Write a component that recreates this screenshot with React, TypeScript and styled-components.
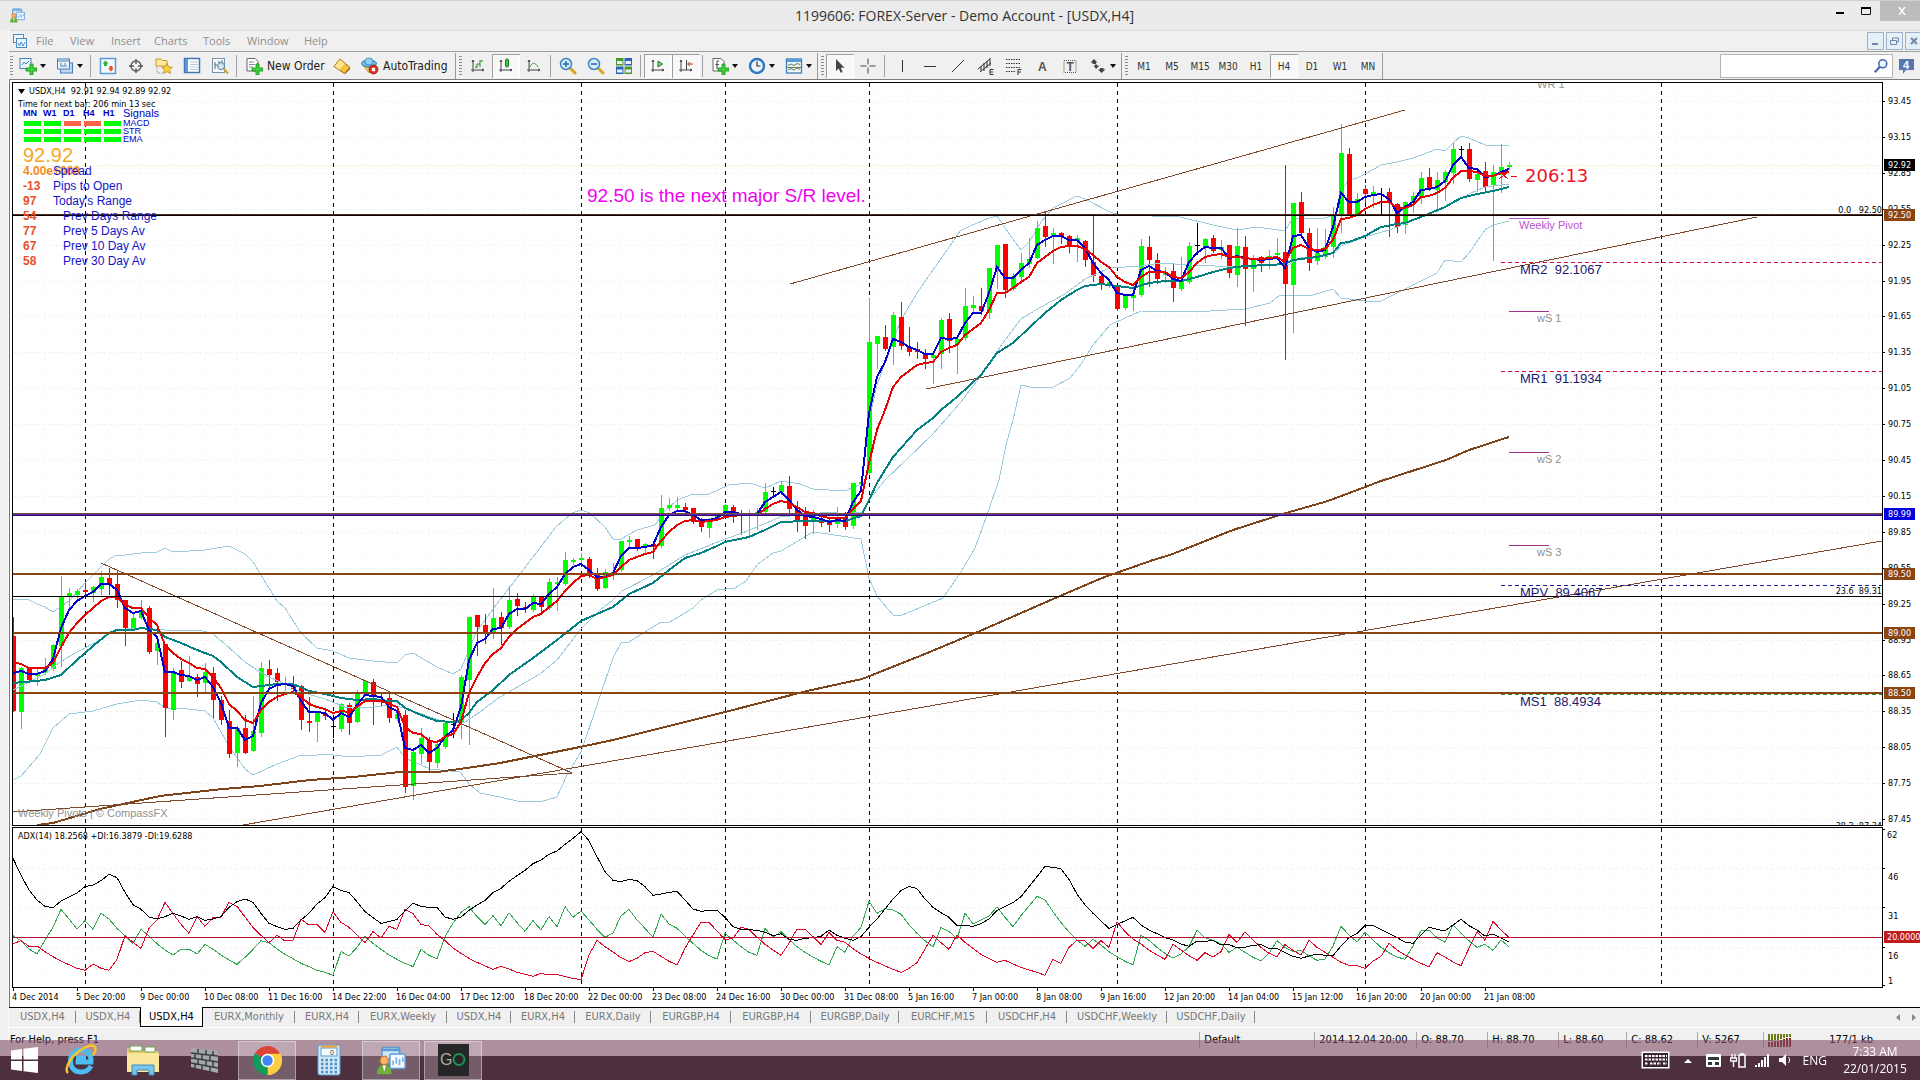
import React from 'react';
import styled, { createGlobalStyle, css } from 'styled-components';

const UI = `"DejaVu Sans Condensed", "Noto Sans", Tahoma, sans-serif`;
const SEGOE = `"Open Sans", "Noto Sans", "Segoe UI", sans-serif`;
const ARIAL = `"Liberation Sans", Arial, sans-serif`;

const GlobalStyle = createGlobalStyle`
  * { box-sizing: border-box; }
  body { margin: 0; background: #000; font-family: ${UI}; font-size: 11px; color: #000; overflow: hidden; }
  button { font: inherit; color: inherit; border: 0; padding: 0; background: none; }
`;

/* ---------- market data: bars are 8px apart ---------- */

type Bar = [string, number, number, number, number]; // kind, high, body top, body bottom, low

const BARS: Bar[] = `
r617,636,711,711 g667,668,712,728 r667,668,680,682 g669,673,676,685 g658,669,673,674 g644,645,669,670 g576,597,646,666 g588,593,597,608
g589,591,595,598 r583,590,591,596 g586,587,593,601 g571,577,589,594 r568,578,585,594 r571,584,600,607 r600,600,628,645 g612,618,628,630
g600,611,618,618 r606,608,652,653 g641,643,651,664 r644,644,708,736 g668,672,710,719 r661,670,682,687 g656,677,681,681 r674,677,684,696
g663,672,683,693 r667,673,700,717 r696,700,720,724 r710,721,754,757 g726,728,753,766 r715,728,753,753 g696,731,751,751 g662,668,733,736
r660,669,675,687 r668,673,682,700 g677,683,685,690 r676,685,689,693 r685,686,720,729 r697,721,722,731 g712,713,722,741 r708,714,715,719
k720,726,727,737 g703,704,729,731 r703,705,723,734 g690,693,722,722 g680,681,693,694 r679,682,696,724 r693,699,701,705 r692,698,718,722
g712,714,719,720 r710,715,787,792 g750,752,786,799 g728,738,754,763 r737,741,762,770 g743,744,763,767 g721,723,747,748 k713,724,725,737
g675,677,722,738 g617,617,680,744 r615,615,627,655 r614,625,633,643 g588,618,634,638 r612,617,628,644 g586,600,627,628 r593,599,606,615
r602,607,609,612 g594,597,610,611 r597,597,607,613 g578,582,608,609 g577,582,584,610 g552,560,584,585 g558,560,562,564 g553,558,560,565
r557,559,573,577 r568,575,589,590 g569,572,588,588 g563,572,575,579 g541,541,570,571 g536,540,542,548 r539,539,548,550 g543,544,547,553
r541,544,547,558 g495,508,546,547 g498,505,508,510 g497,505,508,510 r503,507,510,512 r508,508,522,523 r518,520,527,531 g518,520,528,537
g514,516,519,520 g504,505,513,514 r505,507,516,522 r510,514,516,534 g510,513,516,537 g508,512,514,529 g483,492,512,513 k487,491,492,497
g481,485,492,494 r476,486,509,512 r501,510,520,531 r507,514,526,538 g510,515,521,533 r516,519,523,526 r518,521,525,531 g507,519,524,527
r512,517,527,529 g483,483,526,528 g480,482,484,485 g298,342,473,473 g336,336,344,368 r325,337,349,350 g312,315,347,364 r302,317,346,349
r327,347,352,355 r342,349,352,358 r349,353,359,368 g353,355,358,383 g318,320,354,368 r313,319,341,352 g337,339,344,373 g288,306,338,340
g296,305,308,313 r288,306,311,314 g268,268,313,318 g245,245,268,288 r244,244,290,297 g273,276,289,290 g253,263,277,283 g238,259,264,267
g221,228,258,258 r212,226,237,246 g228,233,237,263 r232,233,236,243 r235,236,246,252 g235,238,241,261 r240,241,260,266 r215,262,276,281
r275,276,284,289 g280,282,286,287 r286,286,309,310 g295,296,308,309 g285,295,298,310 g239,246,295,296 r236,247,260,286 r253,260,279,283
g267,272,275,282 r264,271,288,301 g257,281,289,290 g242,246,282,283 k223,245,246,254 g238,239,247,262 r235,238,251,252 g240,247,250,258
r245,245,273,277 g228,246,275,286 r236,247,269,325 g255,260,269,291 r256,257,263,271 g250,256,259,268 g238,253,255,258 r165,252,284,359
g203,203,285,332 r192,202,233,235 r228,233,263,270 g228,253,261,264 g229,247,257,258 g207,215,247,257 g124,153,215,232 r148,154,214,215
g193,199,214,215 r185,189,194,202 g186,192,195,207 k188,194,195,215 r188,192,202,236 r203,204,227,232 g201,202,225,233 g192,196,203,212
g172,178,197,203 r168,177,188,190 g172,180,190,211 g170,172,182,200 g143,149,173,183 k146,149,150,157 r143,149,179,181 g170,174,180,191
r162,171,187,192 g165,172,185,260 g144,167,175,192 g162,165,167,169
`.trim().split(/\s+/).map((s) => [s[0], ...s.slice(1).split(',').map(Number)] as Bar);

const nums = (s: string) => s.trim().split(/\s+/).map(Number);

const FAST = nums(`673 671 674 674 671 659 628 610 601 596 592 584 584 590 608 613 611 630 637 672 672 675 676 680 677 687 703 728 728 740 736 703
689 685 684 686 701 712 712 713 720 713 717 705 695 696 697 707 711 748 750 745 753 748 737 730 707 660 643 639 629 628 614 609 609 603 604 594
587 574 567 564 570 577 577 573 556 548 548 547 545 527 515 511 511 515 520 520 518 512 512 514 515 514 502 497 492 500 510 516 517 519 522 520
521 502 491 413 377 362 339 342 347 350 354 354 338 339 338 323 313 313 293 267 278 278 270 263 245 240 236 236 240 240 248 263 273 280 293 295
295 270 266 271 272 279 281 262 253 247 248 248 258 256 258 259 260 259 258 268 236 235 248 252 250 227 193 202 202 197 195 194 199 213 207 202
190 189 187 181 165 157 168 169 177 176 172 169`);

const SLOW = nums(`662 664 668 668 668 663 647 633 623 615 608 601 597 597 605 608 608 618 625 645 653 659 663 668 669 677 688 704 711 720 723 710
702 697 694 692 697 704 707 709 713 711 712 707 701 701 701 704 707 727 733 734 741 742 737 734 722 693 677 663 654 648 637 629 623 617 614 607
601 591 583 576 575 579 577 575 567 560 557 554 552 541 532 525 521 520 522 521 520 517 516 515 515 515 509 504 501 503 507 512 513 516 518 518
518 509 501 463 430 410 387 377 371 365 363 362 352 348 345 335 329 323 310 293 293 288 282 277 263 257 251 247 246 246 249 255 262 267 277 282
285 277 272 272 272 277 278 272 263 257 255 254 257 257 258 259 259 258 257 262 248 245 249 250 249 240 219 218 215 209 205 202 202 208 208 205
197 196 193 188 178 171 171 172 176 176 173 172`);

// x,y pairs in window pixels
const TREND_MA = `13,683 45,680 61,675 77,660 93,646 109,633 117,630 133,630 141,628 157,630 165,637 181,643 197,650 213,656 221,662 237,677 253,687
277,684 293,684 309,691 325,694 341,698 357,700 373,699 389,701 397,701 405,708 421,715 437,721 453,722 461,720 469,713 477,702 493,690 509,675 533,658
557,640 581,621 597,614 613,607 629,594 653,583 669,570 685,558 701,553 717,546 725,542 749,537 765,530 781,522 805,521 845,521 861,516 869,500 877,483
893,457 917,430 933,418 941,410 957,397 981,375 997,353 1013,343 1029,328 1045,313 1061,300 1077,290 1085,286 1101,284 1117,286 1133,288 1149,283
1165,281 1181,281 1197,277 1213,272 1229,268 1245,266 1269,265 1285,264 1293,260 1301,259 1317,257 1333,253 1341,243 1349,242 1365,236 1381,227 1397,224
1405,223 1421,217 1445,207 1461,198 1477,194 1493,191 1509,187`;
const LONG_MA = `37,825 53,823 100,809 160,796 223,789 260,786 310,780 353,777 400,772 437,772 467,768 500,763 580,747 613,740 725,712 807,691 862,679
920,656 980,631 1060,596 1102,578 1153,560 1170,555 1233,530 1286,513 1328,501 1381,481 1446,460 1469,450 1509,437`;
const BAND_UP = `13,600 20,599 29,600 37,604 45,607 53,612 69,601 85,583 101,567 109,559 117,555 125,555 141,553 157,552 165,548 173,552 205,550 229,546
245,554 253,562 277,601 285,608 301,633 317,648 333,651 349,658 373,661 397,663 405,655 413,653 437,667 453,674 461,669 469,650 476,633 487,617 500,600
517,578 533,557 556,527 572,513 581,510 590,513 605,527 613,539 621,539 637,530 655,525 663,513 677,500 693,494 709,494 729,485 750,483 765,488 781,481
800,484 813,489 845,491 861,484 869,420 877,385 886,360 900,322 917,293 933,270 952,243 960,231 970,226 989,218 997,216 1010,235 1021,250 1030,241
1041,222 1053,208 1077,196 1085,199 1110,212 1120,215 1152,216 1180,217 1213,225 1237,230 1257,227 1285,231 1292,219 1325,218 1335,215 1341,190 1349,180
1357,178 1365,174 1381,165 1397,162 1413,158 1437,149 1445,151 1453,143 1461,136 1469,138 1485,145 1509,146`;
const BAND_MID = `13,690 29,682 45,674 60,662 77,652 100,640 115,630 140,628 165,630 200,630 213,634 225,644 245,662 257,670 269,677 285,684 301,692
325,699 345,707 365,708 390,705 405,708 430,717 445,722 465,722 480,712 500,697 540,674 557,660 580,630 600,610 613,600 622,591 653,575 685,555 720,541
750,530 780,517 830,512 845,514 862,512 869,500 885,480 907,459 933,434 960,403 980,377 1000,347 1021,319 1041,307 1065,294 1085,279 1109,268 1141,266
1160,263 1190,265 1240,267 1290,264 1300,258 1325,256 1336,252 1341,246 1365,237 1389,230 1405,224 1445,207 1469,194 1485,187 1509,184`;
const BAND_LOW = `13,780 21,776 40,754 53,728 69,714 93,711 117,704 141,700 157,702 165,708 180,708 205,711 213,718 229,746 245,769 253,775 277,764
301,755 310,756 325,754 350,757 381,755 397,747 405,758 430,769 460,772 470,785 480,793 500,797 517,801 540,802 557,797 566,777 581,752 597,705 613,658
621,643 629,642 661,622 670,622 693,608 701,600 717,590 735,588 746,581 757,565 773,553 781,551 813,532 821,533 861,539 869,578 877,596 893,615 902,615
943,598 961,572 975,548 987,515 999,480 1006,445 1013,420 1021,385 1030,387 1053,387 1070,378 1082,363 1093,345 1110,325 1125,318 1141,311 1180,312
1210,311 1245,309 1270,303 1280,295 1313,295 1333,289 1341,298 1365,301 1381,301 1397,293 1413,285 1437,273 1445,260 1461,262 1469,253 1485,230
1493,225 1509,221`;

// ADX panel series, in thirds of a pixel
const ADX = nums(`115 165 210 240 259 263 243 231 219 200 195 182 163 173 217 254 268 291 297 290 280 288 298 290 301 297 290 262 245 237 247 280 310
320 328 325 300 280 252 233 199 211 218 245 275 293 310 305 298 272 250 259 262 262 291 298 291 271 255 241 217 205 184 167 151 131 120 103 93 73 55 35
62 110 155 181 185 178 182 200 226 222 217 214 240 267 274 271 271 292 320 328 329 331 337 347 341 358 361 355 353 349 330 346 355 361 350 322 297 267
237 212 199 206 237 262 278 292 316 316 319 311 297 271 260 248 230 200 170 139 142 146 178 222 255 280 303 325 313 303 292 315 330 341 353 360 372 379
363 364 361 375 374 383 382 376 374 385 386 398 409 415 408 402 406 407 378 353 341 316 316 328 340 353 366 370 345 322 328 333 315 298 317 330 348 342
354 366`);
const PLUS_DI = nums(`347 362 387 402 360 322 268 297 327 302 328 280 297 325 348 370 328 348 371 390 405 388 387 402 373 388 405 420 433 412 388 362
368 387 403 416 430 440 451 457 466 395 408 382 350 370 388 405 418 430 440 388 406 417 350 310 277 260 290 314 287 317 278 308 334 302 330 290 320 260
292 273 300 328 352 339 288 268 300 325 352 282 312 325 348 370 391 407 417 340 360 380 397 406 325 352 335 358 380 397 411 424 435 380 397 349 322 244
280 266 270 283 315 340 362 381 322 334 357 280 312 300 288 261 292 320 287 258 229 240 275 307 336 360 379 358 375 395 410 424 434 346 361 382 400 414
402 380 331 353 361 372 397 382 397 412 423 400 362 382 395 391 408 421 417 378 319 345 366 337 360 382 398 411 418 378 332 330 353 367 314 340 362 382
373 391 360 380`);
const MINUS_DI = nums(`371 362 379 378 395 410 423 434 445 451 432 445 451 418 347 367 385 325 300 247 281 313 340 290 319 293 291 247 259 291 322 346
368 345 363 360 298 315 314 337 275 307 322 345 368 335 354 319 328 268 281 313 318 343 362 384 400 415 427 438 448 439 447 457 463 469 460 465 463 470
475 479 405 361 380 396 413 425 415 398 394 409 424 435 385 345 307 307 333 359 355 322 328 352 373 390 406 370 327 328 350 374 337 361 367 386 402 415
427 438 448 457 445 428 387 346 368 388 345 367 385 403 415 427 421 432 442 450 457 466 418 430 382 361 363 385 362 382 306 335 357 372 390 405 418 373
390 407 421 398 411 395 343 367 336 360 382 400 410 374 391 405 361 382 397 412 427 436 437 445 423 409 370 390 405 418 430 441 398 411 426 437 385 335
361 304 330 352`);

const BREAKS = [85, 333, 581, 725, 869, 1117, 1365, 1661];
const PRICES = Array.from({ length: 21 }, (_, i) => ({ label: (93.45 - i * 0.3).toFixed(2), y: Math.round(101 + i * 35.9) }));
const DATES = ['4 Dec 2014', '5 Dec 20:00', '9 Dec 00:00', '10 Dec 08:00', '11 Dec 16:00', '14 Dec 22:00', '16 Dec 04:00', '17 Dec 12:00',
  '18 Dec 20:00', '22 Dec 00:00', '23 Dec 08:00', '24 Dec 16:00', '30 Dec 00:00', '31 Dec 08:00', '5 Jan 16:00', '7 Jan 00:00', '8 Jan 08:00',
  '9 Jan 16:00', '12 Jan 20:00', '14 Jan 04:00', '15 Jan 12:00', '16 Jan 20:00', '20 Jan 00:00', '21 Jan 08:00'];

const onBars = (v: number[]) => v.map((y, i) => `${13 + i * 8},${y}`).join(' ');
const onBarsThird = (v: number[]) => v.map((y, i) => `${13 + i * 8},${820 + y / 3}`).join(' ');

/* ---------- window frame ---------- */

const Win = styled.main`
  display: flex; flex-direction: column; height: calc(100vh - 24px); background: #f0f0f0; overflow: hidden;
`;
const TitleBar = styled.header`
  display: flex; align-items: center; height: 30px; flex: none; background: #ebebeb; border-top: 1px solid #cfcfcf; padding-left: 10px;
`;
const Title = styled.h1`
  flex: 1; margin: 0; text-align: center; font: 400 14px ${SEGOE}; color: #333;
`;
const WinButtons = styled.div`
  display: flex; justify-content: flex-end; align-self: flex-start; align-items: center; width: 120px; margin-left: -104px;
`;
const WinBtn = styled.button<{ $close?: boolean }>`
  width: 27px; height: 20px; display: flex; align-items: center; justify-content: center;
  ${(p) => p.$close && css`width: 40px; padding-left: 4px; background: #bcbcbc; color: #fff; flex: none;`}
`;
const Body = styled.div`
  display: flex; flex-direction: column; flex: 1; min-height: 0; border-left: 1px solid #fafafa; margin-left: 8px;
`;
const MenuBar = styled.nav`
  display: flex; align-items: center; height: 21px; flex: none; padding-left: 3px; border-top: 1px solid #dcdcdc; font: 11px ${SEGOE}; color: #8f8f8f;
`;
const MenuItem = styled.button<{ $w: number }>`
  width: ${(p) => p.$w}px; text-align: left; padding: 0 0 2px 8px;
`;
const MdiButtons = styled.div`
  display: flex; gap: 2px; margin-left: auto;
`;
const MdiBtn = styled.button`
  width: 17px; height: 18px; border: 1px solid #9fb2c9; background: #e6eff8; display: flex; align-items: center; justify-content: center;
  &:last-child { margin-right: -2px; }
`;

const ToolBar = styled.div`
  display: flex; align-items: center; height: 29px; flex: none; border-top: 1px solid #9c9c9c; border-bottom: 1px solid #7c7c7c; padding-top: 1px;
`;
const Group = styled.div`
  display: flex; align-items: center; height: 26px; border-right: 1px solid #9a9a9a;
`;
const Grip = styled.span<{ $first?: boolean }>`
  width: 3px; height: 20px; margin: ${(p) => (p.$first ? '0 1px' : '0 2px 0 3px')};
  background: repeating-linear-gradient(#8a8a8a 0 1px, transparent 1px 3px);
`;
const Sep = styled.span`
  width: 6px; height: 22px; background: linear-gradient(90deg, transparent 2px, #a3a3a3 2px, #a3a3a3 3px, transparent 3px);
`;
const Tool = styled.button<{ $on?: boolean }>`
  display: flex; align-items: center; justify-content: center; width: 28px; height: 24px; color: #222;
  ${(p) => p.$on && css`background: #f8f8f8; box-shadow: inset 1px 1px 0 #a0a0a0, inset -1px -1px 0 #fff;`}
`;
const Drop = styled(Tool)`
  width: 37px; justify-content: flex-start; padding-left: 5px; gap: 3px;
`;
const TextTool = styled(Tool)<{ $w: number }>`
  width: ${(p) => p.$w}px; justify-content: flex-start; padding-left: 5px; gap: 4px; font-size: 12px; white-space: nowrap;
`;
const Frame = styled(Tool)`
  font-size: 10px; color: #333;
`;
const Search = styled.label`
  display: flex; align-items: center; width: 173px; height: 24px; margin-left: auto; background: #fff; border: 1px solid #b5b5b5; padding-right: 3px;
`;
const SearchInput = styled.input`
  flex: 1; min-width: 0; border: 0; outline: 0; background: none; font: 11px ${UI};
`;
const Chat = styled.button`
  width: 27px; height: 24px; display: flex; align-items: center; justify-content: center;
`;

/* ---------- chart ---------- */

const ChartArea = styled.section`
  display: flex; flex-direction: column; flex: 1; min-height: 0; background: #fff; border-left: 1px solid #777; padding: 2px 0 0 2px;
`;
const Panel = styled.div<{ $grow?: boolean }>`
  display: flex; ${(p) => (p.$grow ? css`flex: 1; min-height: 0; margin-bottom: 1px;` : css`flex: none; height: 161px;`)}
`;
const Plot = styled.div`
  position: relative; flex: 1; min-width: 0; border: 1px solid #000;
`;
const PlotSvg = styled.svg`
  display: block; width: 100%; height: 100%; shape-rendering: crispEdges;
`;
const AxisSvg = styled.svg`
  display: block; flex: none; width: 37px; height: 100%; font: 9px ${UI}; shape-rendering: crispEdges; overflow: hidden;
`;
const TimeAxis = styled.ol`
  display: flex; flex: none; height: 19px; margin: 0; padding: 0; list-style: none; font-size: 9px; white-space: nowrap;
`;
const TimeTick = styled.li`
  width: 64px; flex: none; line-height: 18px;
  background: linear-gradient(#000, #000) 1px 0 / 1px 3px no-repeat;
`;
const Overlay = styled.div`
  position: absolute; left: 1px; top: 2px; font: 12px/15px ${ARIAL}; color: #0000c8; white-space: nowrap;
`;
const Info = styled.div`
  font: 9px/13px ${UI}; color: #000; padding-left: 4px;
`;
const InfoMark = styled.svg`
  margin-right: 4px;
`;
const Signals = styled.div`
  display: grid; grid-template-columns: repeat(5, 20px) auto; grid-template-rows: 12px; grid-auto-rows: 8px; align-items: center;
  margin-top: -4px; padding-left: 9px; font-size: 9px; line-height: 8px; color: #0000c8;
`;
const SignalHead = styled.b<{ $plain?: boolean }>`
  ${(p) => p.$plain && css`font-weight: 400; font-size: 11px;`}
`;
const Lamp = styled.span<{ $down?: boolean }>`
  width: 17px; height: 5px; margin-left: 1px; background: ${(p) => (p.$down ? '#ff6347' : '#00ff00')};
`;
const BigPrice = styled.div`
  height: 21px; font-size: 20px; line-height: 24px; color: #f5a81c; padding-left: 9px;
`;
const Stat = styled.div`
  display: grid; grid-template-columns: 30px auto; padding-left: 9px; height: 15px;
`;
const StatValue = styled.b<{ $amber?: boolean }>`
  width: 30px; color: ${(p) => (p.$amber ? '#f58a1c' : '#e8502a')};
`;
const StatName = styled.span<{ $in?: boolean }>`
  padding-left: ${(p) => (p.$in ? 10 : 0)}px; color: #1414c8;
`;

/* ---------- tabs, status bar ---------- */

const Tabs = styled.div`
  display: flex; flex: none; height: 20px; border-top: 1px solid #000; font-size: 11px; color: #777; white-space: nowrap;
`;
const Tab = styled.button<{ $w: number; $on?: boolean }>`
  width: ${(p) => p.$w}px; height: 18px; flex: none; padding-bottom: 1px;
  background: linear-gradient(#888, #888) 100% 3px / 1px 12px no-repeat;
  ${(p) => p.$on && css`background: #fff; color: #000; border: solid #000; border-width: 0 1px 1px; margin-top: -1px; height: 20px;`}
`;
const TabArrows = styled.div`
  display: flex; gap: 12px; margin: 6px 4px 0 auto;
`;
const Status = styled.footer`
  display: flex; flex: none; height: 29px; border-top: 1px solid #fff; font-size: 11px; line-height: 24px; white-space: nowrap;
`;
const StatusCell = styled.div<{ $w?: number }>`
  ${(p) => (p.$w ? css`width: ${p.$w}px; padding-left: 5px;` : css`flex: 1; padding-left: 1px;`)}
  background: ${(p) => (p.$w ? 'linear-gradient(#aaa, #aaa) 0 4px / 1px 16px no-repeat' : 'none')};
  svg { display: block; margin-top: 6px; }
`;
const Traffic = styled.div`
  padding-right: 47px;
`;

/* ---------- taskbar ---------- */

const TaskBar = styled.footer`
  position: fixed; left: 0; right: 0; bottom: 0; height: 40px; display: flex; align-items: center;
  background: rgba(130, 78, 103, 0.6); color: #fff; font: 12px/17px ${SEGOE};
`;
const Task = styled.button<{ $on?: boolean }>`
  width: 58px; height: 39px; margin-right: 4px; display: flex; align-items: center; justify-content: center;
  ${(p) => p.$on && css`background: rgba(255, 255, 255, 0.22); border: 1px solid rgba(255, 255, 255, 0.4);`}
`;
const Start = styled(Task)`
  width: 48px;
`;
const Tray = styled.div`
  display: flex; align-items: center; gap: 9px; margin-left: auto;
`;
const Clock = styled.time`
  width: 90px; margin-left: -6px; text-align: center;
`;

/* ---------- icons ---------- */

const Ico: React.FC<{ s?: number; children: React.ReactNode }> = ({ s = 18, children }) => (
  <svg width={s} height={s} viewBox="0 0 18 18" fill="none" aria-hidden="true">{children}</svg>
);
const Caret = () => <svg width="6" height="4" viewBox="0 0 6 4" aria-hidden="true"><path d="M0 0h6L3 4z" fill="#111" /></svg>;
const Plus = () => <path d="M11 7h3v4h4v3h-4v4h-3v-4H7v-3h4z" fill="#3fd23f" stroke="#148a14" strokeWidth=".8" />;
const Axes = () => <path d="M4 3v12M2 13h13M4 3L3 5M4 3l1 2M15 13l-2-1M15 13l-2 1" stroke="#444" />;
const Lens = ({ minus }: { minus?: boolean }) => (
  <Ico>
    <path d="M11 11l5 5" stroke="#d9a520" strokeWidth="3" strokeLinecap="round" />
    <circle cx="7" cy="7" r="5.500" fill="#d6ecfb" stroke="#3b83c4" strokeWidth="1.500" />
    <path d={minus ? 'M4 7h6' : 'M4 7h6M7 4v6'} stroke="#2468ad" strokeWidth="1.500" />
  </Ico>
);

const IcNewChart = () => <Ico><rect x="1" y="1.500" width="11" height="10" fill="#eaf4fd" stroke="#4a82b4" /><path d="M3 8l2-3 2 2 3-3" stroke="#4a82b4" /><Plus /></Ico>;
const IcProfiles = () => <Ico><rect x="4.500" y="6" width="12" height="10" fill="#bcd8f0" stroke="#4a7fb5" /><rect x="1.500" y="2" width="12" height="10" fill="#eaf4fd" stroke="#4a7fb5" /><path d="M2 4h11M4 9h7M4 7h2M8 7h2" stroke="#4a7fb5" /></Ico>;
const IcMarket = () => <Ico><rect x="1.500" y="1.500" width="15" height="15" fill="#f4faff" stroke="#5b9bd5" strokeWidth="1.500" /><path d="M6.500 3.500l3 3H8V9H5V6.500H3.500z" fill="#2db92d" /><path d="M12 14.500l-3-3h1.500V9h3v2.500H15z" fill="#e8562a" /></Ico>;
const IcTarget = () => <Ico><circle cx="9" cy="9" r="5" stroke="#555" strokeWidth="1.300" /><path d="M9 2v5M9 11v5M2 9h5M11 9h5" stroke="#555" strokeWidth="1.300" /></Ico>;
const IcFolder = () => <Ico><path d="M1 2h5l1.500 1.500H12V9H1z" fill="#ffe9a0" stroke="#c79a2a" /><path d="M2 10v6h5" stroke="#888" strokeDasharray="1 1" /><path d="M12 6.500l1.700 3.400 3.600.4-2.700 2.500.8 3.700-3.400-1.900-3.400 1.900.8-3.700-2.700-2.500 3.600-.4z" fill="#ffd23f" stroke="#b8860b" strokeWidth=".8" /></Ico>;
const IcData = () => <Ico><rect x="1.500" y="1.500" width="15" height="14" fill="#fff" stroke="#3f78b5" strokeWidth="1.500" /><rect x="2" y="2" width="3" height="13" fill="#5a9bdb" /><path d="M7 5h8M7 7.500h8M7 10h8M7 12.500h8" stroke="#b5c9dd" /></Ico>;
const IcTester = () => <Ico><rect x="1.500" y="1.500" width="12" height="14" fill="#f3f8fc" stroke="#7d93a8" /><path d="M4 12V5M4 8h2M8 4v6M11 3v6" stroke="#4a7a50" /><circle cx="10" cy="9" r="3.500" fill="#cfe6f7" fillOpacity=".8" stroke="#4e7ea8" /><path d="M13 12l4 4.500" stroke="#d9a520" strokeWidth="2" /></Ico>;
const IcOrder = () => <Ico><path d="M2 1.500h8l3 3V14H2z" fill="#fff" stroke="#666" /><path d="M4 5h5M4 7.500h6M4 10h4" stroke="#888" /><Plus /></Ico>;
const IcGold = () => <Ico><path d="M1 9.500L7 2l10 8.500-5.500 6z" fill="#f3c23c" stroke="#96690c" /><path d="M1.500 9.500L7 2.500l5 4.200-5.500 6z" fill="#ffe38a" /><path d="M11.500 16.500l5.500-6v2l-5.500 5z" fill="#a06c10" /></Ico>;
const IcAuto = () => <Ico><path d="M2 8l6 8 6-8z" fill="#f1c84c" stroke="#b58a1b" strokeWidth=".7" /><ellipse cx="8" cy="6.500" rx="7.500" ry="3.500" fill="#6db9e8" stroke="#2c79ad" /><ellipse cx="8" cy="4.500" rx="4" ry="3.500" fill="#8fd0f5" stroke="#2c79ad" strokeWidth=".7" /><circle cx="12.500" cy="12.500" r="4.500" fill="#d93025" stroke="#8d1710" strokeWidth=".7" /><rect x="10.800" y="10.800" width="3.400" height="3.400" fill="#fff" /></Ico>;
const IcBars = () => <Ico><Axes /><path d="M8 11V7M11 10V3M11 4h3M6 10h2M8 7h3" stroke="#2a8a2a" /></Ico>;
const IcCandle = () => <Ico><Axes /><path d="M10 1v10" stroke="#1a7a1a" /><rect x="8.500" y="3" width="3" height="6" fill="#3fd23f" stroke="#1a7a1a" /></Ico>;
const IcLine = () => <Ico><Axes /><path d="M5 10c2-5 5-5 8 0" stroke="#3a9a3a" /></Ico>;
const IcTiles = () => <Ico><rect x="1" y="1" width="7.500" height="7.500" fill="#4a9a2a" /><rect x="9.500" y="1" width="7.500" height="7.500" fill="#2c62b8" /><rect x="1" y="9.500" width="7.500" height="7.500" fill="#2c62b8" /><rect x="9.500" y="9.500" width="7.500" height="7.500" fill="#4a9a2a" /><path d="M2 4h5.500v3H2zM10.500 4H16v3h-5.500zM2 12.500h5.500v3H2zM10.500 12.500H16v3h-5.500z" fill="#e8f2f8" /></Ico>;
const IcScroll = () => <Ico><Axes /><path d="M9 4v6l4.500-3z" fill="#7fe07f" stroke="#157015" /></Ico>;
const IcShift = () => <Ico><Axes /><path d="M9.500 3v10" stroke="#444" /><path d="M11 7h5M13 5l-2.500 2L13 9" stroke="#a33c1e" /></Ico>;
const IcInd = () => <Ico><path d="M2 1.500h8l3 3V14H2z" fill="#fff" stroke="#666" /><path d="M8 4H6v8M4.500 7.500H8" stroke="#444" /><Plus /></Ico>;
const IcClock = () => <Ico><circle cx="9" cy="9" r="7" fill="#e9f4fc" stroke="#2f78bf" strokeWidth="2.500" /><path d="M9 4.500V9h3.500" stroke="#333" strokeWidth="1.200" /></Ico>;
const IcTemplate = () => <Ico><rect x="1.500" y="2" width="15" height="14" fill="#eef7fd" stroke="#3f7fb5" strokeWidth="1.300" /><path d="M2 3.500h14" stroke="#5a9bdb" strokeWidth="3" /><path d="M3 8.500l3-1.500 3 1.500 3-2 3 1M3 13l3-1.500 3 1.500 3-2 3 1.500M2 10.500h14" stroke="#6a7a55" /></Ico>;
const IcCursor = () => <Ico><path d="M5 2v12l2.800-2.500 1.800 4.300 2-.9-1.800-4.200h3.700z" fill="#444" /></Ico>;
const IcCross = () => <Ico><path d="M9 1.500V7.500M9 10.500v6M1.500 9h6M10.500 9h6" stroke="#444" /></Ico>;
const IcV = () => <Ico><path d="M9.500 3v12" stroke="#333" /></Ico>;
const IcH = () => <Ico><path d="M3 9.500h12" stroke="#333" /></Ico>;
const IcTrend = () => <Ico><path d="M3 15L15 3" stroke="#333" /></Ico>;
const IcChannel = () => <Ico><path d="M1 12L13 2M3 15L14 6M4 9v5M7 6v8M10 4v7M13 1v8" stroke="#333" /><path d="M16.500 12.500H13v5h3.500M13 15h3" stroke="#333" /></Ico>;
const IcFibo = () => <Ico><path d="M1 2.500h15M1 6.500h15M1 10.500h15M1 14.500h9" stroke="#333" strokeDasharray="1.500 1" /><path d="M16.500 12.500H13V18M13 15h3" stroke="#333" /></Ico>;
const IcArrows = () => <Ico><path d="M5 2l3.500 3.500H7V7H3.500V5.500h-2zM5 9l2-2 2 2 2-1-4 4zM12.500 16L9 12.500h2V11h3.500v1.500h2z" fill="#444" /></Ico>;
const IcGlass = () => <Ico s={16}><circle cx="11" cy="6.500" r="4.500" fill="#eef6ff" stroke="#4067b0" strokeWidth="1.800" /><path d="M7.500 10L2 16" stroke="#4067b0" strokeWidth="2.500" /></Ico>;

const AppIcon = ({ s }: { s: number }) => (
  <Ico s={s}>
    <rect x="3" y="1" width="11" height="10" rx="1" fill="#cfe7f8" stroke="#5b9bd5" /><path d="M3 2.500h11" stroke="#5b9bd5" strokeWidth="1.500" />
    <rect x="8" y="5" width="9.500" height="9" rx="1" fill="#f4faff" stroke="#5b9bd5" /><path d="M10 12V9M12 11V7M14 12V8M16 10V7" stroke="#7ab0dc" />
    <path d="M0 17.500c0-4 2-6 4.500-6s4.500 2 4.500 6z" fill="#6fae3c" /><path d="M3.500 12l1 4 1-4z" fill="#fff" /><circle cx="4.500" cy="9" r="2.700" fill="#f6b26b" stroke="#b5651d" strokeWidth=".6" />
  </Ico>
);

/* ---------- chart drawing ---------- */

const BAR_COLORS: Record<string, string> = { g: '#00ff00', r: '#ff0000', k: '#000' };

const Candles = () => (
  <g>
    {BARS.map(([kind, hi, top, bottom, lo], i) => {
      const x = 13 + i * 8;
      return (
        <g key={i} fill={BAR_COLORS[kind]}>
          <rect x={x} y={hi} width="1" height={lo - hi + 1} />
          <rect x={x - 2} y={top} width="5" height={Math.max(bottom - top, kind === 'k' ? 1 : 2)} />
        </g>
      );
    })}
  </g>
);

const VGrid = ({ top, bottom }: { top: number; bottom: number }) => (
  <g>
    {Array.from({ length: 110 }, (_, i) => (
      <path key={i} d={`M${45.5 + i * 32} ${top}V${bottom}`} stroke="#f4f4f1" strokeDasharray="2 3" />
    ))}
    {BREAKS.map((x) => <path key={x} d={`M${x + 0.5} ${top}V${bottom}`} stroke="#000" strokeDasharray="4 4" />)}
  </g>
);

const HLine = ({ y, c, w = 1, dash, from = 13 }: { y: number; c: string; w?: number; dash?: string; from?: number }) => (
  <path d={`M${from} ${y}H6000`} stroke={c} strokeWidth={w} strokeDasharray={dash} />
);

const PriceChart = () => (
  <PlotSvg role="img" aria-label="USDX H4 price chart">
    <g transform="translate(-13,-83)" fill="none">
      {PRICES.map((p) => <HLine key={p.label} y={p.y + 0.5} c="#f2f2ee" dash="3 3" />)}
      <HLine y={165.5} c="#f8f8dc" />
      <VGrid top={83} bottom={2000} />
      <g stroke="#9ccbe0"><polyline points={BAND_UP} /><polyline points={BAND_LOW} /></g>
      <Candles />
      <polyline points={BAND_MID} stroke="#9ccbe0" />
      <polyline points={LONG_MA} stroke="#7d4419" strokeWidth="2" />
      <polyline points={TREND_MA} stroke="#008080" strokeWidth="2" />
      <polyline points={onBars(FAST)} stroke="#0000cd" strokeWidth="2" />
      <polyline points={onBars(SLOW)} stroke="#e60000" strokeWidth="2" />
      <path d="M101 563L572 773L13 812M243 825L1882 541M790 284L1405 110M926 389L1757 217" stroke="#7d4a2c" />
      <HLine y={214.5} c="#5a2a10" /><HLine y={215.5} c="#000" />
      <HLine y={513.5} c="#7d4a3a" /><HLine y={514.5} c="#5b2ca0" /><HLine y={515.5} c="#2a0a80" />
      <HLine y={574} c="#8b4513" w={2} /><HLine y={596.5} c="#000" />
      <HLine y={633} c="#8b4513" w={2} /><HLine y={693} c="#8b4513" w={2} />
      <HLine y={262.5} c="#d0103a" dash="4 3" from={1501} />
      <HLine y={371.5} c="#d0103a" dash="4 3" from={1501} />
      <HLine y={585.5} c="#1a1a9a" dash="4 3" from={1501} />
      <HLine y={694.5} c="#2e8b2e" dash="4 3" from={1501} />
      <path d="M1509 218.500h40" stroke="#ba55d3" />
      <path d="M1509 311.500h40M1509 452.500h40M1509 545.500h40" stroke="#a0308a" />
      <path d="M1499 179l9-7M1501 173l7 6M1511 176.500h6" stroke="#e01020" />
      <g fontFamily={ARIAL}>
        <text x="587" y="202" fontSize="19" fill="#f000f0">92.50 is the next major S/R level.</text>
        <text x="1519" y="229" fontSize="11" fill="#ba55d3">Weekly Pivot</text>
        <g fontSize="11" fill="#909090">
          <text x="1537" y="88">WR 1</text><text x="1537" y="322">wS 1</text><text x="1537" y="463">wS 2</text><text x="1537" y="556">wS 3</text>
          <text x="18" y="817">Weekly Pivots | © CompassFX</text>
        </g>
        <g fontSize="13" fill="#191970">
          <text x="1520" y="274">MR2&#160;&#160;92.1067</text><text x="1520" y="383">MR1&#160;&#160;91.1934</text>
          <text x="1520" y="597">MPV&#160;&#160;89.4067</text><text x="1520" y="706">MS1&#160;&#160;88.4934</text>
        </g>
      </g>
      <text x="1525" y="182" fontSize="18" fontFamily={`"DejaVu Sans", sans-serif`} fill="#f01428">206:13</text>
    </g>
    <g transform="translate(0,-83)" fontSize="9" fontFamily={UI} textAnchor="end">
      <text x="100%" y="213">0.0&#160;&#160;&#160;92.50</text>
      <text x="100%" y="594">23.6&#160;&#160;89.31</text>
      <text x="100%" y="829">38.2&#160;&#160;87.34</text>
    </g>
  </PlotSvg>
);

const Badge = ({ y, c, children }: { y: number; c: string; children: string }) => (
  <g><rect x="1" y={y - 6} width="31" height="12" fill={c} /><text x="5" y={y + 3} fill="#fff">{children}</text></g>
);

const PriceAxis = () => (
  <AxisSvg>
    <g transform="translate(0,-82)">
      {PRICES.map((p) => <g key={p.label}><path d={`M0 ${p.y + 0.5}h2`} stroke="#000" /><text x="5" y={p.y + 3}>{p.label}</text></g>)}
      <Badge y={165} c="#000">92.92</Badge>
      <Badge y={215} c="#8b4513">92.50</Badge>
      <Badge y={514} c="#0000e0">89.99</Badge>
      <Badge y={574} c="#8b4513">89.50</Badge>
      <Badge y={633} c="#8b4513">89.00</Badge>
      <Badge y={693} c="#8b4513">88.50</Badge>
    </g>
  </AxisSvg>
);

const AdxChart = () => (
  <PlotSvg role="img" aria-label="ADX indicator">
    <g transform="translate(-13,-828)" fill="none">
      {[868, 907, 947].map((y) => <HLine key={y} y={y + 0.5} c="#f0f0ec" dash="3 3" />)}
      <VGrid top={828} bottom={987} />
      <polyline points={onBarsThird(PLUS_DI)} stroke="#32a852" />
      <polyline points={onBarsThird(MINUS_DI)} stroke="#dc0a28" />
      <polyline points={onBarsThird(ADX)} stroke="#000" />
      <HLine y={937.5} c="#b01432" />
    </g>
  </PlotSvg>
);

const AdxAxis = () => (
  <AxisSvg>
    <g transform="translate(0,-827)">
      <path d="M0 829.500h2M0 868.500h2M0 907.500h2M0 947.500h2M0 985.500h2" stroke="#000" />
      <text x="4" y="838">62</text><text x="5" y="880">46</text><text x="5" y="919">31</text><text x="5" y="959">16</text><text x="5" y="984">1</text>
      <rect x="1" y="931" width="36" height="12" fill="#c01c1c" /><text x="4" y="940" fill="#fff">20.0000</text>
    </g>
  </AxisSvg>
);

const STATS: [string, string, boolean][] = [
  ['4.00e+000', 'Spread', false], ['-13', 'Pips to Open', false], ['97', "Today's Range", false], ['54', 'Prev Days Range', true],
  ['77', 'Prev 5 Days Av', true], ['67', 'Prev 10 Day Av', true], ['58', 'Prev 30 Day Av', true],
];
const SIGNALS: [string, number[]][] = [['MACD', [2, 3]], ['STR', []], ['EMA', []]];

const TABS: [string, number][] = [['USDX,H4', 67], ['USDX,H4', 64], ['USDX,H4', 63], ['EURX,Monthly', 92], ['EURX,H4', 64], ['EURX,Weekly', 88],
  ['USDX,H4', 64], ['EURX,H4', 64], ['EURX,Daily', 76], ['EURGBP,H4', 80], ['EURGBP,H4', 80], ['EURGBP,Daily', 88], ['EURCHF,M15', 88],
  ['USDCHF,H4', 80], ['USDCHF,Weekly', 100], ['USDCHF,Daily', 88]];
const MENU: [string, number][] = [['File', 34], ['View', 41], ['Insert', 43], ['Charts', 49], ['Tools', 44], ['Window', 57], ['Help', 40]];
const CELLS: [string, number][] = [['Default', 115], ['2014.12.04 20:00', 102], ['O: 88.70', 71], ['H: 88.70', 71], ['L: 88.60', 68], ['C: 88.62', 71], ['V: 5267', 66]];

const Toolbar = () => (
  <ToolBar>
    <Group>
      <Grip $first />
      <Drop aria-label="New chart"><IcNewChart /><Caret /></Drop>
      <Drop aria-label="Profiles"><IcProfiles /><Caret /></Drop>
      <Sep />
      <Tool aria-label="Market Watch"><IcMarket /></Tool>
      <Tool aria-label="Data crosshair"><IcTarget /></Tool>
      <Tool aria-label="Navigator"><IcFolder /></Tool>
      <Tool aria-label="Terminal"><IcData /></Tool>
      <Tool aria-label="Strategy Tester"><IcTester /></Tool>
      <Sep />
      <TextTool $w={88}><IcOrder />New Order</TextTool>
      <Tool aria-label="MetaEditor"><IcGold /></Tool>
      <TextTool $w={99}><IcAuto />AutoTrading</TextTool>
    </Group>
    <Group>
      <Grip />
      <Tool aria-label="Bar chart"><IcBars /></Tool>
      <Tool $on aria-label="Candlesticks"><IcCandle /></Tool>
      <Tool aria-label="Line chart"><IcLine /></Tool>
      <Sep />
      <Tool aria-label="Zoom in"><Lens /></Tool>
      <Tool aria-label="Zoom out"><Lens minus /></Tool>
      <Tool aria-label="Tile windows"><IcTiles /></Tool>
      <Sep />
      <Tool $on aria-label="Auto scroll"><IcScroll /></Tool>
      <Tool $on aria-label="Chart shift"><IcShift /></Tool>
      <Sep />
      <Drop aria-label="Indicators"><IcInd /><Caret /></Drop>
      <Drop aria-label="Periods"><IcClock /><Caret /></Drop>
      <Drop aria-label="Templates"><IcTemplate /><Caret /></Drop>
    </Group>
    <Group>
      <Grip />
      <Tool $on aria-label="Cursor"><IcCursor /></Tool>
      <Tool aria-label="Crosshair"><IcCross /></Tool>
      <Sep />
      <Tool aria-label="Vertical line"><IcV /></Tool>
      <Tool aria-label="Horizontal line"><IcH /></Tool>
      <Tool aria-label="Trendline"><IcTrend /></Tool>
      <Tool aria-label="Channel"><IcChannel /></Tool>
      <Tool aria-label="Fibonacci"><IcFibo /></Tool>
      <Tool aria-label="Text"><svg width="18" height="18" viewBox="0 0 18 18"><text x="5" y="14" fontSize="12" fontWeight="700" fontFamily={ARIAL} fill="#555">A</text></svg></Tool>
      <Tool aria-label="Text label"><svg width="18" height="18" viewBox="0 0 18 18"><rect x="3" y="3.500" width="12" height="12" fill="none" stroke="#555" strokeDasharray="1 1" /><text x="5.500" y="14" fontSize="12" fontWeight="700" fontFamily={ARIAL} fill="#555">T</text></svg></Tool>
      <Drop aria-label="Arrows"><IcArrows /><Caret /></Drop>
    </Group>
    <Group>
      <Grip />
      {['M1', 'M5', 'M15', 'M30', 'H1', 'H4', 'D1', 'W1', 'MN'].map((f) => <Frame key={f} $on={f === 'H4'}>{f}</Frame>)}
    </Group>
    <Search><SearchInput aria-label="Search" /><IcGlass /></Search>
    <Chat aria-label="Messages">
      <svg width="17" height="18" viewBox="0 0 17 18"><path d="M1 2h15v11H8l-3 4v-4H1z" fill="#5677ae" /><text x="5" y="12" fontSize="11" fontWeight="700" fontFamily={ARIAL} fill="#fff">4</text></svg>
    </Chat>
  </ToolBar>
);

const Chart = () => (
  <ChartArea>
    <Panel $grow>
      <Plot>
        <PriceChart />
        <Overlay>
          <Info><InfoMark width="7" height="5" viewBox="0 0 7 5"><path d="M0 0h7L3.500 5z" /></InfoMark>USDX,H4&#160;&#160;92.91 92.94 92.89 92.92</Info>
          <Info>Time for next bar: 206 min 13 sec</Info>
          <Signals>
            {['MN', 'W1', 'D1', 'H4', 'H1'].map((h) => <SignalHead key={h}>{h}</SignalHead>)}
            <SignalHead $plain>Signals</SignalHead>
            {SIGNALS.map(([name, down]) => (
              <React.Fragment key={name}>
                {[0, 1, 2, 3, 4].map((i) => <Lamp key={i} $down={down.includes(i)} />)}
                <span>{name}</span>
              </React.Fragment>
            ))}
          </Signals>
          <BigPrice>92.92</BigPrice>
          {STATS.map(([v, name, inset], i) => (
            <Stat key={name}><StatValue $amber={i === 0}>{v}</StatValue><StatName $in={inset}>{name}</StatName></Stat>
          ))}
        </Overlay>
      </Plot>
      <PriceAxis />
    </Panel>
    <Panel>
      <Plot><AdxChart /><Overlay><Info>ADX(14) 18.2568 +DI:16.3879 -DI:19.6288</Info></Overlay></Plot>
      <AdxAxis />
    </Panel>
    <TimeAxis>{DATES.map((d) => <TimeTick key={d}>{d}</TimeTick>)}</TimeAxis>
  </ChartArea>
);

const Taskbar = () => (
  <TaskBar>
    <Start aria-label="Start"><svg width="27" height="26" viewBox="0 0 27 26" fill="#fff"><path d="M0 3.500L11 2v10.500H0zM12.500 1.800L27 0v12.500H12.500zM0 14h11v10L0 22.500zM12.500 14H27v12l-14.500-1.800z" /></svg></Start>
    <Task aria-label="Internet Explorer">
      <svg width="32" height="32" viewBox="0 0 32 32" fill="none"><path d="M26 22c-2 4-5.500 6-10 6C9.500 28 5.500 23.500 5.500 17S10 6 16 6c6.500 0 10.500 5 10 12H10.500M11 14h10" stroke="#4cbcf2" strokeWidth="5" /><path d="M3 29C-1 25 5 14 13 8c7-6 15-8 17-5s-1 6-2 8" stroke="#f6c52c" strokeWidth="2.500" /></svg>
    </Task>
    <Task aria-label="File Explorer">
      <svg width="34" height="32" viewBox="0 0 34 32"><path d="M1 4h9l2 3h20v21H1z" fill="#e8c860" /><path d="M4 2h12v5H4zM19 3h10v5H19z" fill="#fff" stroke="#6aa84f" /><path d="M1 9h32v19H1z" fill="#fae79c" /><path d="M6 31V21h22v10h-5v-5H11v5z" fill="#79c6ec" stroke="#3c8cbc" /></svg>
    </Task>
    <Task aria-label="Firewall">
      <svg width="32" height="30" viewBox="0 0 32 30"><path d="M2 3l27 3v22L2 22z" fill="#a4a9ad" /><path d="M2 8l27 3M2 13l27 4M2 18l27 5M9 4v5M17 5v5M24 6v5M6 9v5M13 10v5M21 11v5M9 14v6M17 15v6M24 17v6M6 19v5M13 20v5M21 22v5" stroke="#3c3e42" strokeWidth="1.500" /></svg>
    </Task>
    <Task $on aria-label="Chrome">
      <svg width="29" height="29" viewBox="0 0 28 28"><path d="M14 14L1.900 7A14 14 0 0 1 26.100 7z" fill="#db4437" /><path d="M14 14L26.100 7A14 14 0 0 1 14 28z" fill="#ffcd40" /><path d="M14 14v14A14 14 0 0 1 1.900 7z" fill="#0f9d58" /><path d="M14 7.500h12.400A14 14 0 0 1 14 28l5.600-10.700z" fill="#ffcd40" /><circle cx="14" cy="14" r="6.500" fill="#fff" /><circle cx="14" cy="14" r="5" fill="#4285f4" /></svg>
    </Task>
    <Task aria-label="Calculator">
      <svg width="24" height="32" viewBox="0 0 24 32"><rect x="1" y="1" width="22" height="30" rx="2" fill="#d4e8f6" stroke="#5b9ccf" /><rect x="4" y="4" width="16" height="8" fill="#f5fafd" stroke="#5b9ccf" /><path d="M4 2.500h16" stroke="#f0a030" strokeWidth="2" /><text x="13" y="11" fontSize="7" fontFamily={ARIAL} fill="#345">0</text><path d="M4 16h16M4 20h16M4 24h16M4 28h16" stroke="#4a90c8" strokeWidth="2.500" strokeDasharray="2.500 2" /></svg>
    </Task>
    <Task $on aria-label="MetaTrader"><AppIcon s={29} /></Task>
    <Task $on aria-label="GO">
      <svg width="31" height="32" viewBox="0 0 31 32"><rect width="31" height="32" fill="#262626" /><text x="2" y="21" fontSize="16" fontFamily={ARIAL} fill="#aaa">G</text><circle cx="21" cy="15.500" r="5.500" fill="none" stroke="#1f8f5a" strokeWidth="2" /></svg>
    </Task>
    <Tray>
      <svg width="29" height="18" viewBox="0 0 29 18"><rect x=".5" y=".5" width="28" height="17" fill="#fff" /><rect x="2" y="2" width="25" height="14" fill="#3b2430" /><path d="M4 5h22M4 8.500h22M4 12.500h3M9 12.500h11M22 12.500h4" stroke="#fff" strokeWidth="2" strokeDasharray="2.500 1" /></svg>
      <svg width="18" height="5" viewBox="0 0 18 5"><path d="M5 5l4-4 4 4z" fill="#fff" /></svg>
      <svg width="15" height="13" viewBox="0 0 15 13"><rect width="15" height="13" rx="1" fill="#fff" /><path d="M2 3h11v3H2zM2 8h4v3H2zM9 8h4v3H9z" fill="#2e3b36" /></svg>
      <svg width="16" height="15" viewBox="0 0 16 15" fill="none" stroke="#fff"><path d="M2 1v4M5 1v4M.5 5H6.500v3H.5zM3.500 8v6" strokeWidth="1.300" /><rect x="9" y="2" width="6" height="12" strokeWidth="1.500" /><path d="M12 0v2" strokeWidth="3" /></svg>
      <svg width="15" height="13" viewBox="0 0 15 13" fill="#fff"><path d="M0 11h2v2H0zM3 9h2v4H3zM6 6h2v7H6zM9 3h2v10H9zM12 0h2v13h-2z" /></svg>
      <svg width="15" height="14" viewBox="0 0 15 14"><path d="M0 5h3l4-4v12L3 9H0z" fill="#fff" /><path d="M9.500 4c1.500 2 1.500 4 0 6" fill="none" stroke="#fff" /></svg>
      <span>ENG</span>
      <Clock>7:33 AM<br />22/01/2015</Clock>
    </Tray>
  </TaskBar>
);

export default function App() {
  return (
    <>
      <GlobalStyle />
      <Win>
        <TitleBar>
          <AppIcon s={15} />
          <Title>1199606: FOREX-Server - Demo Account - [USDX,H4]</Title>
          <WinButtons>
            <WinBtn aria-label="Minimise"><svg width="8" height="10"><path d="M0 6h8v2H0z" /></svg></WinBtn>
            <WinBtn aria-label="Maximise"><svg width="11" height="9"><path d="M.5 1.500h9v6h-9z" fill="none" stroke="#111" /><path d="M0 0h10v2H0z" /></svg></WinBtn>
            <WinBtn $close aria-label="Close"><svg width="8" height="8"><path d="M1 0l6 8M7 0L1 8" stroke="#fff" strokeWidth="1.500" /></svg></WinBtn>
          </WinButtons>
        </TitleBar>
        <Body>
          <MenuBar>
            <svg width="16" height="16" viewBox="0 0 16 16" fill="#eef6fd" stroke="#4a8cc8"><rect x="1.500" y="1.500" width="10" height="8" /><rect x="4.500" y="5.500" width="10" height="9" /><path d="M6 10l1.500 3L9 9l2 4 2-4" fill="none" /></svg>
            {MENU.map(([m, w]) => <MenuItem key={m} $w={w}>{m}</MenuItem>)}
            <MdiButtons>
              <MdiBtn aria-label="Minimise chart"><svg width="7" height="8"><path d="M0 6h6v2H0z" fill="#6f87a5" /></svg></MdiBtn>
              <MdiBtn aria-label="Restore chart"><svg width="9" height="9" fill="none" stroke="#6f87a5"><path d="M2.500 3V1h6v4H7M.5 3.500h6v4h-6z" /></svg></MdiBtn>
              <MdiBtn aria-label="Close chart"><svg width="8" height="8"><path d="M1 1l6 6M7 1L1 7" stroke="#6f87a5" strokeWidth="2" /></svg></MdiBtn>
            </MdiButtons>
          </MenuBar>
          <Toolbar />
          <Chart />
          <Tabs>
            {TABS.map(([t, w], i) => <Tab key={i} $w={w} $on={i === 2}>{t}</Tab>)}
            <TabArrows>
              <svg width="4" height="7"><path d="M4 0v7L0 3.500z" fill="#888" /></svg>
              <svg width="4" height="7"><path d="M0 0v7l4-3.500z" fill="#888" /></svg>
            </TabArrows>
          </Tabs>
          <Status>
            <StatusCell>For Help, press F1</StatusCell>
            {CELLS.map(([t, w]) => <StatusCell key={t} $w={w}>{t}</StatusCell>)}
            <StatusCell $w={66}>
              <svg width="24" height="13" viewBox="0 0 24 13"><path d="M1 0v7M4 0v7M7 0v6M10 0v6M13 0v5M16 0v4M19 0v3M22 0v3" stroke="#6b7a10" strokeWidth="2" /><path d="M1 8v5M4 8v5M7 7v6M10 7v6M13 6v7M16 5v8M19 4v9M22 4v9" stroke="#8a2a20" strokeWidth="2" /></svg>
            </StatusCell>
            <Traffic>177/1 kb</Traffic>
          </Status>
        </Body>
      </Win>
      <Taskbar />
    </>
  );
}
